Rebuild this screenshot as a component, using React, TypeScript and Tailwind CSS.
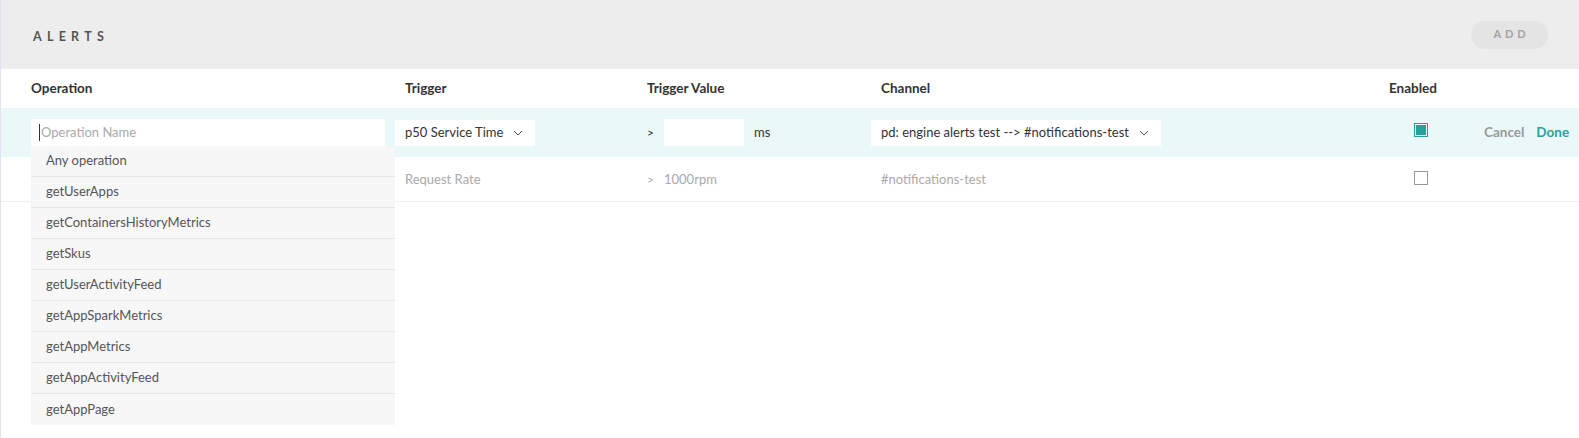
import React from "react";

const font = { fontFamily: "Lato, 'Noto Sans', sans-serif" };

function Chevron() {
  return (
    <svg width="10" height="6" viewBox="0 0 10 6" className="shrink-0">
      <polyline points="1,1 5,5 9,1" fill="none" stroke="#555" strokeWidth="1" />
    </svg>
  );
}

const ops = [
  "Any operation",
  "getUserApps",
  "getContainersHistoryMetrics",
  "getSkus",
  "getUserActivityFeed",
  "getAppSparkMetrics",
  "getAppMetrics",
  "getAppActivityFeed",
  "getAppPage",
];

export default function App() {
  return (
    <div
      className="w-[1579px] h-[438px] bg-white border-l border-[#e4e2f2] text-[13px] overflow-hidden"
      style={font}
    >
      {/* Header */}
      <div className="h-[69px] bg-[#ededed] flex items-center justify-between pl-[32px] pr-[31px]">
        <div className="text-[12.5px] font-bold tracking-[0.42em] text-[#555] mt-[6px]">ALERTS</div>
        <div className="w-[77px] h-[28px] rounded-full bg-[#e4e4e4] flex items-center justify-center text-[11px] font-bold tracking-[0.35em] text-[#a3a3a3] pl-[4px]">
          ADD
        </div>
      </div>

      {/* Table */}
      <div className="relative">
        {/* Column headers */}
        <div className="grid grid-cols-[364px_252px_224px_518px_95px_1fr] pl-[30px] h-[39px] items-center text-[13.5px] font-bold text-[#333] whitespace-nowrap">
          <div>Operation</div>
          <div className="pl-[10px]">Trigger</div>
          <div>Trigger Value</div>
          <div className="pl-[10px]">Channel</div>
          <div>Enabled</div>
          <div />
        </div>

        {/* Editing row */}
        <div className="grid grid-cols-[364px_252px_224px_518px_95px_1fr] pl-[30px] h-[49px] items-center bg-[#eaf8f8] text-[#333] whitespace-nowrap">
          <div className="relative">
            <div className="w-[354px] h-[28px] bg-white flex items-center pl-[8px] text-[#aaa]">
              <span className="w-px h-[17px] bg-[#333] mr-[1px]" />
              Operation Name
            </div>
          </div>
          <div>
            <div className="w-[140px] h-[26px] bg-white flex items-center pl-[10px] gap-[10px]">
              <span>p50 Service Time</span>
              <Chevron />
            </div>
          </div>
          <div className="flex items-center">
            <span className="w-[17px] text-[12px]">&gt;</span>
            <div className="w-[80px] h-[27px] bg-white" />
            <span className="ml-[10px]">ms</span>
          </div>
          <div>
            <div className="w-[290px] h-[26px] bg-white flex items-center pl-[10px] gap-[10px]">
              <span>pd: engine alerts test --&gt; #notifications-test</span>
              <Chevron />
            </div>
          </div>
          <div className="pl-[25px]">
            <div className="w-[14px] h-[14px] border border-[#2aa198] p-[1px] -mt-[5px]">
              <div className="w-full h-full bg-[#2aa198]" />
            </div>
          </div>
          <div className="flex items-center gap-[12px] text-[13.5px] font-bold">
            <span className="text-[#999]">Cancel</span>
            <span className="text-[#2aa198]">Done</span>
          </div>
        </div>

        {/* Row 2 */}
        <div className="grid grid-cols-[364px_252px_224px_518px_95px_1fr] pl-[30px] h-[45px] items-center border-b border-[#f0f0f0] text-[#aaa] whitespace-nowrap">
          <div />
          <div className="pl-[10px] pt-[1px]">Request Rate</div>
          <div className="flex items-center pt-[1px]">
            <span className="w-[17px] text-[12px]">&gt;</span>
            <span>1000rpm</span>
          </div>
          <div className="pl-[10px] pt-[1px]">#notifications-test</div>
          <div className="pl-[25px]">
            <div className="w-[14px] h-[14px] border border-[#999] -mt-[2px]" />
          </div>
          <div />
        </div>

        {/* Dropdown menu */}
        <div className="absolute left-[30px] top-[77px] w-[364px] bg-[#f7f7f7] text-[#555]">
          {ops.map((o, i) => (
            <div
              key={o}
              className={
                "h-[31px] flex items-center pl-[15px] " +
                (i < ops.length - 1 ? "border-b border-[#e6e6e6]" : "")
              }
            >
              {o}
            </div>
          ))}
        </div>
      </div>
    </div>
  );
}
